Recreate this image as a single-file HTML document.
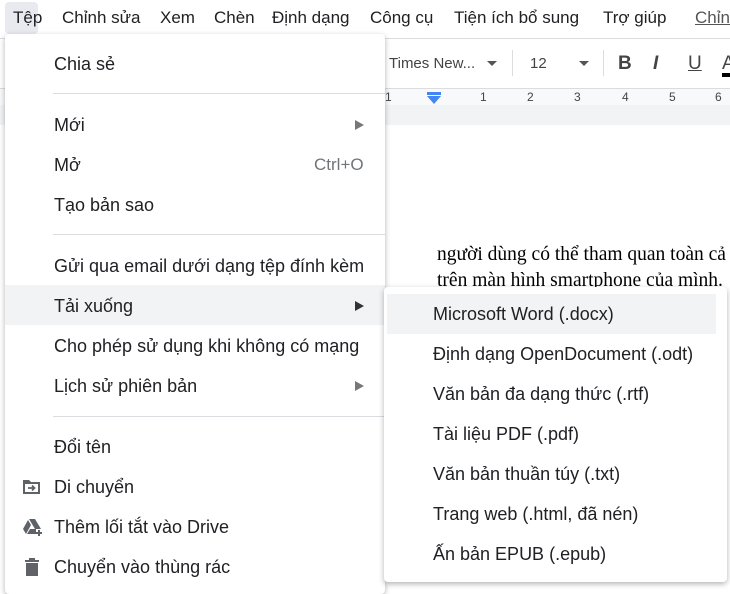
<!DOCTYPE html><html><head><meta charset="utf-8"><style>
body{margin:0;width:730px;height:586px;overflow:hidden;background:#fff;font-family:"Liberation Sans",Arial,sans-serif;position:relative;color:#202124}
.a{position:absolute;white-space:nowrap}
.mb{font-size:17px;top:8px;color:#202124}
.menu{position:absolute;left:5px;top:34px;width:380px;height:560px;background:#fff;box-shadow:0 2px 6px rgba(0,0,0,.3);border-radius:4px}
.it{position:absolute;left:49px;font-size:18px;color:#202124}
.hr{position:absolute;left:48px;right:0;height:1px;background:#dadce0}
.arr{position:absolute;left:350px;width:0;height:0;border-left:9px solid #777;border-top:5px solid transparent;border-bottom:5px solid transparent}
.sub{position:absolute;left:384px;top:287px;width:343px;height:295px;background:#fff;box-shadow:0 2px 6px rgba(0,0,0,.3);border-radius:4px}
.si{position:absolute;left:49px;font-size:18px;color:#202124}
</style></head><body>
<div class="a" style="left:5px;top:2px;width:33px;height:32px;background:#e8eaf0;border-radius:4px"></div>
<div class="a mb" style="left:13px">Tệp</div>
<div class="a mb" style="left:62px">Chỉnh sửa</div>
<div class="a mb" style="left:160px">Xem</div>
<div class="a mb" style="left:214px">Chèn</div>
<div class="a mb" style="left:272px">Định dạng</div>
<div class="a mb" style="left:370px">Công cụ</div>
<div class="a mb" style="left:454px">Tiện ích bổ sung</div>
<div class="a mb" style="left:603px">Trợ giúp</div>
<div class="a mb" style="left:695px;color:#555;text-decoration:underline">Chỉnh</div>
<div class="a" style="left:0;top:38px;width:730px;height:1px;background:#dadce0"></div>
<div class="a" style="left:389px;top:55px;font-size:15px;color:#444">Times New...</div>
<div class="a" style="left:487px;top:61px;border-top:5px solid #555;border-left:5px solid transparent;border-right:5px solid transparent"></div>
<div class="a" style="left:512px;top:50px;width:1px;height:26px;background:#dadce0"></div>
<div class="a" style="left:530px;top:55px;font-size:15px;color:#444">12</div>
<div class="a" style="left:579px;top:61px;border-top:5px solid #555;border-left:5px solid transparent;border-right:5px solid transparent"></div>
<div class="a" style="left:603px;top:50px;width:1px;height:26px;background:#dadce0"></div>
<div class="a" style="left:618px;top:53px;font-size:19px;font-weight:bold;color:#444">B</div>
<div class="a" style="left:653px;top:53px;font-size:19px;font-style:italic;font-weight:bold;color:#444">I</div>
<div class="a" style="left:688px;top:53px;font-size:19px;text-decoration:underline;color:#444">U</div>
<div class="a" style="left:722px;top:53px;font-size:19px;color:#444">A</div>
<div class="a" style="left:722px;top:73px;width:8px;height:4px;background:#000"></div>
<div class="a" style="left:0;top:88px;width:730px;height:1px;background:#dadce0"></div>
<div class="a" style="left:0;top:89px;width:730px;height:16px;background:#f8f9fa"></div>
<div class="a" style="left:385px;top:90px;font-size:12px;color:#444">1</div>
<div class="a" style="left:480px;top:90px;font-size:12px;color:#444">1</div>
<div class="a" style="left:527px;top:90px;font-size:12px;color:#444">2</div>
<div class="a" style="left:574px;top:90px;font-size:12px;color:#444">3</div>
<div class="a" style="left:622px;top:90px;font-size:12px;color:#444">4</div>
<div class="a" style="left:669px;top:90px;font-size:12px;color:#444">5</div>
<div class="a" style="left:715px;top:90px;font-size:12px;color:#444">6</div>
<div class="a" style="left:427px;top:92px;width:14px;height:3px;background:#4285f4"></div>
<div class="a" style="left:427px;top:96px;border-top:8px solid #4285f4;border-left:7px solid transparent;border-right:7px solid transparent"></div>
<div class="a" style="left:0;top:105px;width:730px;height:20px;background:#f1f3f4"></div>
<div class="a" style="left:437px;top:244px;font-family:'Liberation Serif',serif;font-size:19.5px;color:#000">người dùng có thể tham quan toàn cả</div>
<div class="a" style="left:437px;top:270px;font-family:'Liberation Serif',serif;font-size:19.5px;color:#000">trên màn hình smartphone của mình.</div>
<div class="menu">
<div class="it" style="top:20px">Chia sẻ</div>
<div class="hr" style="top:59px"></div>
<div class="it" style="top:81px">Mới</div><div class="arr" style="top:86px"></div>
<div class="it" style="top:121px">Mở</div><div class="a" style="left:309px;top:121px;font-size:17px;color:#70757a">Ctrl+O</div>
<div class="it" style="top:161px">Tạo bản sao</div>
<div class="hr" style="top:200px"></div>
<div class="it" style="top:222px">Gửi qua email dưới dạng tệp đính kèm</div>
<div class="a" style="left:0;top:251px;width:380px;height:40px;background:#f1f3f4"></div>
<div class="it" style="top:262px">Tải xuống</div><div class="arr" style="top:267px;border-left-color:#333"></div>
<div class="it" style="top:302px">Cho phép sử dụng khi không có mạng</div>
<div class="it" style="top:342px">Lịch sử phiên bản</div><div class="arr" style="top:347px"></div>
<div class="hr" style="top:382px"></div>
<div class="it" style="top:403px">Đổi tên</div>
<svg class="a" style="left:17px;top:444px" width="20" height="18" viewBox="0 0 20 18"><path d="M1 2h6l2 2h9v12H1z" fill="#5f6368"/><rect x="3" y="6" width="13" height="8" fill="#fff"/><path d="M6 10h6M10 7.5l2.5 2.5-2.5 2.5" stroke="#5f6368" stroke-width="1.8" fill="none"/></svg>
<div class="it" style="top:443px">Di chuyển</div>
<svg class="a" style="left:17px;top:484px" width="22" height="18" viewBox="0 0 22 18"><path d="M7 1h6l6 10h-6zM6 2l3 5-5 9-3-5zM5 16l3-5h6v5z" fill="#5f6368"/><path d="M17 12v6M14 15h6" stroke="#5f6368" stroke-width="2"/></svg>
<div class="it" style="top:483px">Thêm lối tắt vào Drive</div>
<svg class="a" style="left:19px;top:523px" width="16" height="20" viewBox="0 0 16 20"><path d="M5 1h6v2h4v2H1V3h4zM2 6h12v13H2z" fill="#5f6368"/></svg>
<div class="it" style="top:523px">Chuyển vào thùng rác</div>
</div>
<div class="sub">
<div class="a" style="left:3px;top:7px;width:329px;height:40px;background:#f1f3f4"></div>
<div class="si" style="top:17px">Microsoft Word (.docx)</div>
<div class="si" style="top:57px">Định dạng OpenDocument (.odt)</div>
<div class="si" style="top:97px">Văn bản đa dạng thức (.rtf)</div>
<div class="si" style="top:137px">Tài liệu PDF (.pdf)</div>
<div class="si" style="top:177px">Văn bản thuần túy (.txt)</div>
<div class="si" style="top:217px">Trang web (.html, đã nén)</div>
<div class="si" style="top:257px">Ấn bản EPUB (.epub)</div>
</div>
</body></html>
